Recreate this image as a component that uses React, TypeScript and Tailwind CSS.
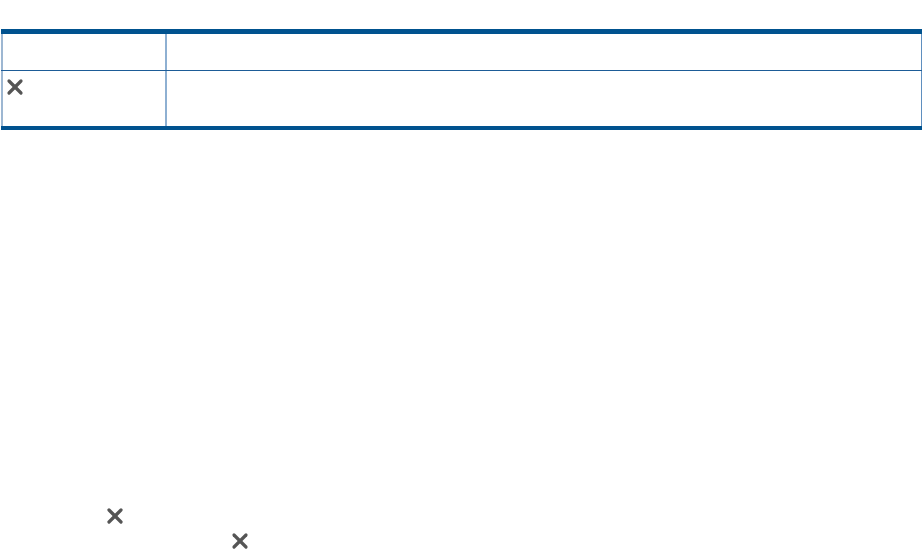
import { X } from 'lucide-react';

function Cross({ className }: { className?: string }) {
  return <X size={24} strokeWidth={3.2} className={`text-[#555555] ${className ?? ''}`} />;
}

export default function App() {
  return (
    <div className="w-[923px] h-[554px] bg-white font-['Liberation_Sans',sans-serif] pt-[29px]">
      <div className="ml-[1px] w-[921px] border-t-[5px] border-b-[4px] border-[#00528f]">
        <div className="flex h-[37px] border-b border-[#1d5c97]">
          <div className="w-[166px] border-l-2 border-r-2 border-l-[#9db7d2] border-r-[#8eb0d2]" />
          <div className="flex-1 border-r border-[#5f8fbf]" />
        </div>
        <div className="flex h-[55px]">
          <div className="w-[166px] border-l-2 border-r-2 border-l-[#9db7d2] border-r-[#8eb0d2] pt-[4px]">
            <Cross />
          </div>
          <div className="flex-1 border-r border-[#5f8fbf]" />
        </div>
      </div>
      <div className="pt-[374px]">
        <div className="ml-[103px] h-[25px]">
          <Cross />
        </div>
        <div className="ml-[228px]">
          <Cross />
        </div>
      </div>
    </div>
  );
}
